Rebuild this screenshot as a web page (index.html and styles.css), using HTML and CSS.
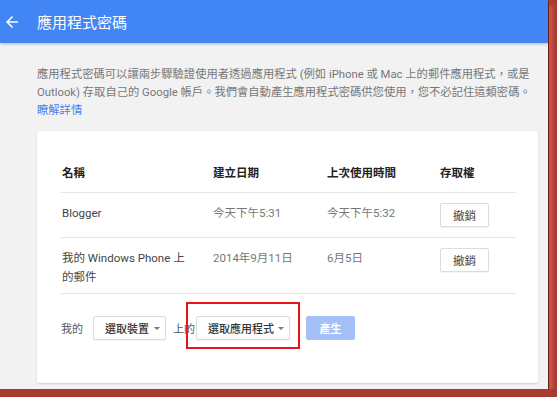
FILE: index.html
```html
<!DOCTYPE html>
<html lang="zh-Hant">
<head>
    <meta charset="UTF-8">
    <meta name="viewport" content="width=device-width, initial-scale=1.0">
    <title>應用程式密碼</title>
    <link rel="stylesheet" href="styles.css">
</head>
<body>
    <div class="screen">
        <!-- Kopfzeile -->
        <header class="topbar">
            <svg class="back" viewBox="0 0 24 24" width="18" height="18">
                <path d="M20 11H7.83l5.59-5.59L12 4l-8 8 8 8 1.41-1.41L7.83 13H20v-2z" fill="#fff"/>
            </svg>
            <h1>應用程式密碼</h1>
        </header>

        <main class="content">
            <p class="intro">
                應用程式密碼可以讓兩步驟驗證使用者透過應用程式 (例如 iPhone 或 Mac 上的郵件應用程式，或是<br>
                Outlook) 存取自己的 Google 帳戶。我們會自動產生應用程式密碼供您使用，您不必記住這類密碼。<br>
                <a href="#">瞭解詳情</a>
            </p>

            <section class="card">
                <table class="apps">
                    <colgroup>
                        <col class="col-name">
                        <col class="col-created">
                        <col class="col-used">
                        <col>
                    </colgroup>
                    <thead>
                        <tr>
                            <th>名稱</th>
                            <th>建立日期</th>
                            <th>上次使用時間</th>
                            <th>存取權</th>
                        </tr>
                    </thead>
                    <tbody>
                        <tr>
                            <td class="name">Blogger</td>
                            <td class="date">今天下午5:31</td>
                            <td class="date">今天下午5:32</td>
                            <td><button class="revoke">撤銷</button></td>
                        </tr>
                        <tr>
                            <td class="name">我的 Windows Phone 上<br>的郵件</td>
                            <td class="date">2014年9月11日</td>
                            <td class="date">6月5日</td>
                            <td><button class="revoke">撤銷</button></td>
                        </tr>
                    </tbody>
                </table>

                <div class="generate">
                    <span class="label">我的</span>
                    <button class="select device">選取裝置<span class="caret"></span></button>
                    <span class="label on">上的</span>
                    <div class="marked">
                        <button class="select app">選取應用程式<span class="caret"></span></button>
                    </div>
                    <button class="primary" disabled>產生</button>
                </div>
            </section>
        </main>
    </div>
</body>
</html>
```

FILE: styles.css
```css
body {
    margin: 0;
    background: #a83b31;
    font-family: Roboto, "Noto Sans CJK TC", sans-serif;
}

.screen {
    width: 548px;
    height: 389px;
    overflow: hidden;
    background-color: #f2f2f2;
    box-shadow: 1px 1px 0 #6b1a14, 5px 5px 4px #c9574b;
}

/* Kopfzeile */
.topbar {
    height: 43px;
    background-color: #4285f4;
    display: flex;
    align-items: center;
    box-shadow: 0 1px 3px rgba(0, 0, 0, 0.25);
    position: relative;
}

.topbar .back {
    margin-left: 3px;
    margin-top: 1px;
}

.topbar h1 {
    margin: 0 0 0 16px;
    font-size: 15px;
    font-weight: normal;
    color: #fff;
    line-height: 20px;
    padding-top: 2px;
}

.content {
    padding: 23px 10px 0 37px;
}

.intro {
    margin: 0 0 11px;
    font-size: 11.3px;
    line-height: 18px;
    color: #777;
    white-space: nowrap;
}

.intro a {
    color: #4a7ff0;
    text-decoration: none;
}

/* Karte */
.card {
    background-color: #fff;
    border-radius: 2px;
    box-shadow: 0 1px 2px rgba(0, 0, 0, 0.15);
    padding: 22px 22px 43px 24px;
}

.apps {
    width: 100%;
    border-collapse: collapse;
    table-layout: fixed;
    font-size: 11.5px;
}

.apps .col-name {
    width: 151px;
}

.apps .col-created {
    width: 114px;
}

.apps .col-used {
    width: 113px;
}

.apps th {
    text-align: left;
    font-weight: bold;
    color: #222;
    line-height: 20px;
    padding: 10px 0 9px 1px;
    border-bottom: 1px solid #e6e6e6;
}

.apps td {
    text-align: left;
    vertical-align: top;
    line-height: 19px;
    padding: 11px 0 6px 1px;
    border-bottom: 1px solid #e6e6e6;
}

.apps .name {
    color: #444;
}

.apps .date {
    color: #777;
}

.revoke {
    width: 49px;
    height: 24px;
    margin: -1px 0 4px;
    font-family: inherit;
    font-size: 11.5px;
    color: #444;
    background-color: #fff;
    border: 1px solid #dcdcdc;
    border-radius: 2px;
    box-shadow: 0 1px 1px rgba(0, 0, 0, 0.05);
    padding: 0;
}

/* Neues Passwort erzeugen */
.generate {
    display: flex;
    align-items: center;
    margin-top: 22px;
    font-size: 11px;
}

.generate .label {
    color: #555;
}

.generate .on {
    margin-left: 7px;
}

.select {
    height: 24px;
    display: flex;
    align-items: center;
    font-family: inherit;
    font-size: 11px;
    font-weight: 500;
    color: #333;
    background-color: #fff;
    border: 1px solid #dcdcdc;
    border-radius: 2px;
    box-shadow: 0 1px 1px rgba(0, 0, 0, 0.05);
}

.select.device {
    width: 73px;
    margin-left: 10px;
    padding: 0 0 0 11px;
}

.select.app {
    width: 94px;
    margin-left: 1px;
    padding: 0 0 0 11px;
}

.select .caret {
    width: 0;
    height: 0;
    border-left: 3px solid transparent;
    border-right: 3px solid transparent;
    border-top: 3px solid #777;
    margin-left: auto;
    margin-right: 5px;
}

.marked {
    position: relative;
}

/* rote Markierung über dem Auswahlfeld */
.marked::after {
    content: "";
    position: absolute;
    top: -14px;
    left: -9px;
    right: -10px;
    bottom: -9px;
    border: 2px solid #e8151b;
}

.primary {
    width: 49px;
    height: 24px;
    margin-left: 16px;
    font-family: inherit;
    font-size: 11px;
    font-weight: bold;
    color: #fff;
    background-color: #a3c1f6;
    border: none;
    border-radius: 2px;
    padding: 0;
}
```
